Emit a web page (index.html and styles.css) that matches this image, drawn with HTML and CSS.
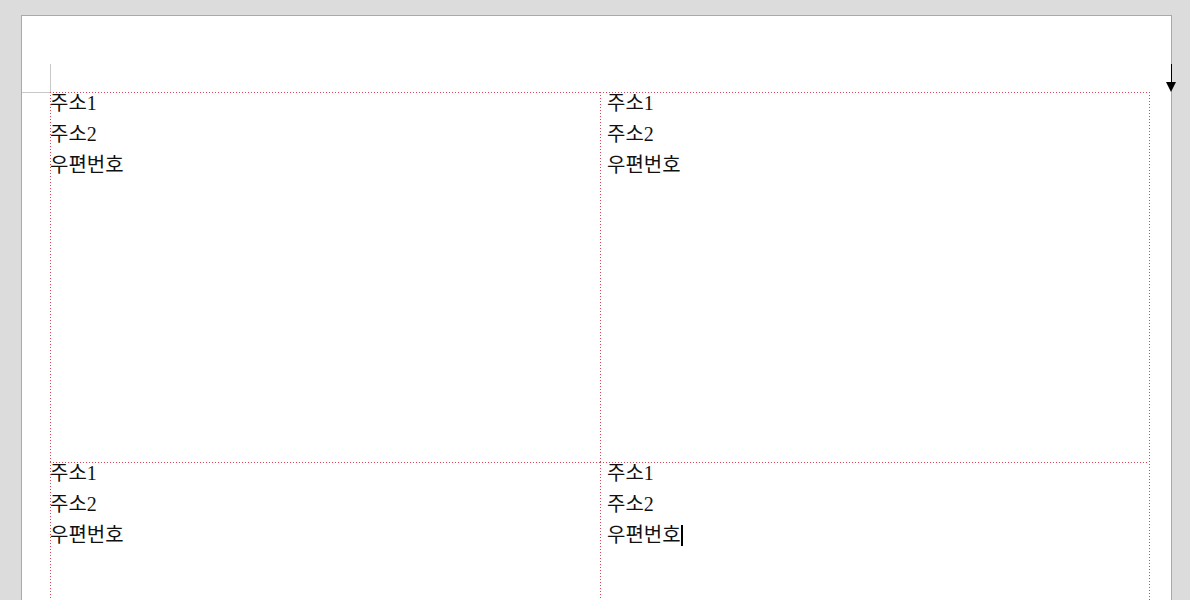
FILE: index.html
```html
<!DOCTYPE html>
<html lang="ko">
<head>
    <meta charset="UTF-8">
    <title>레이블</title>
    <link rel="stylesheet" href="styles.css">
</head>
<body>
    <div class="page">
        <span class="mark mark-v"></span>
        <span class="mark mark-h"></span>
        <span class="arrow"></span>
        <div class="labels">
            <div class="cell">
                <p>주소1</p>
                <p>주소2</p>
                <p>우편번호</p>
            </div>
            <div class="cell right">
                <p>주소1</p>
                <p>주소2</p>
                <p>우편번호</p>
            </div>
            <div class="cell">
                <p>주소1</p>
                <p>주소2</p>
                <p>우편번호</p>
            </div>
            <div class="cell right">
                <p>주소1</p>
                <p>주소2</p>
                <p>우편번호<span class="caret"></span></p>
            </div>
        </div>
    </div>
</body>
</html>
```

FILE: styles.css
```css
html, body {
    height: 600px;
    overflow: hidden;
}
body {
    margin: 0;
    background-color: #dcdcdc;
    font-family: "Liberation Serif", "Noto Sans CJK KR", serif;
}
.page {
    position: relative;
    margin: 15px 0 0 21px;
    width: 1151px;
    height: 585px;
    background-color: white;
    border: 1px solid #a9a9a9;
    border-bottom: none;
    padding: 76px 0 0 28px;
    box-sizing: border-box;
}
.mark {
    position: absolute;
    background-color: #c8c8c8;
}
.mark-v {
    left: 28px;
    top: 48px;
    width: 1px;
    height: 28px;
}
.mark-h {
    left: 0;
    top: 76px;
    width: 28px;
    height: 1px;
}
.arrow {
    position: absolute;
    left: 1149px;
    top: 48px;
    width: 1px;
    height: 20px;
    background-color: black;
}
.arrow::after {
    content: "";
    position: absolute;
    left: -5px;
    top: 18px;
    border-left: 5.5px solid transparent;
    border-right: 5.5px solid transparent;
    border-top: 10px solid black;
}
.labels {
    display: grid;
    grid-template-columns: 550px 548px;
    grid-template-rows: 370px 370px;
    width: 1099px;
    padding-right: 1px;
    background-image: repeating-linear-gradient(to bottom, #dc4654 0 1px, transparent 1px 3px);
    background-size: 1px 100%;
    background-position: right top;
    background-repeat: no-repeat;
}
.cell {
    padding: 1px 0 0 0;
    background-image:
        repeating-linear-gradient(to bottom, #dc4654 0 1px, transparent 1px 3px),
        repeating-linear-gradient(to right, #dc4654 0 1px, transparent 1px 3px);
    background-size: 1px 100%, 100% 1px;
    background-position: left top, left top;
    background-repeat: no-repeat;
}
.cell.right {
    padding-left: 7px;
}
.cell p {
    margin: 0 0 11px 0;
    font-size: 20px;
    line-height: 20px;
    height: 20px;
    color: #111;
}
.caret {
    display: inline-block;
    width: 2px;
    height: 21px;
    background-color: black;
    vertical-align: -4px;
}
```
